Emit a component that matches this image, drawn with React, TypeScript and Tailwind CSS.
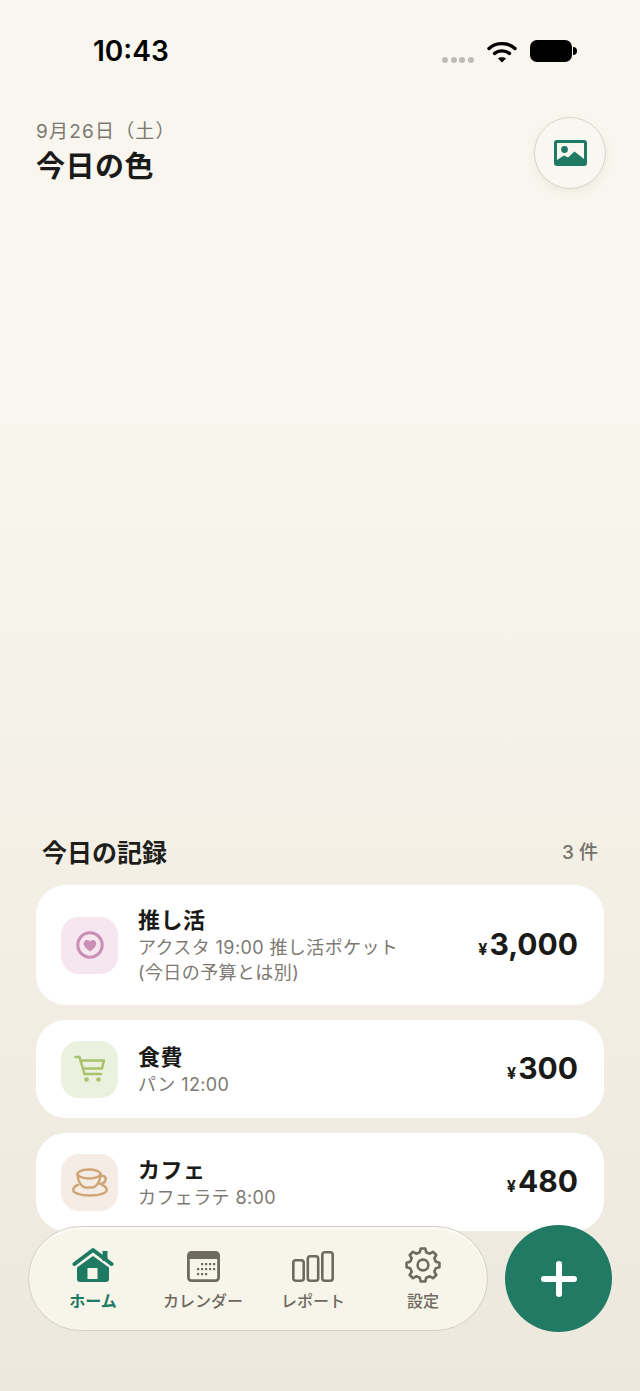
const JP = 'font-["Inter","Noto_Sans_CJK_JP",sans-serif]';

function ImageIcon() {
  return (
    <svg width="33" height="26" viewBox="0 0 33 26">
      <rect x="0" y="0" width="33" height="26" rx="3" fill="#1f7a63" />
      <rect x="3" y="3" width="27" height="18" rx="0.5" fill="#f8f6ef" />
      <circle cx="10.5" cy="9.5" r="3.4" fill="#1f7a63" />
      <path d="M3 20 L10 15.5 L14 17.5 L20.5 11.5 L30 19 V23 H3 Z" fill="#1f7a63" />
    </svg>
  );
}

function HeartIcon() {
  return (
    <svg width="28" height="28" viewBox="0 0 28 28">
      <circle cx="14" cy="14" r="12.2" fill="none" stroke="#c98fb4" strokeWidth="3" />
      <path d="M14 20.5 C9.5 17 7.8 15 7.8 12.4 C7.8 10.3 9.4 9 11.1 9 C12.3 9 13.4 9.6 14 10.7 C14.6 9.6 15.7 9 16.9 9 C18.6 9 20.2 10.3 20.2 12.4 C20.2 15 18.5 17 14 20.5 Z" fill="#c98fb4" />
    </svg>
  );
}

function CartIcon() {
  return (
    <svg width="32" height="28" viewBox="0 0 32 28" fill="none" stroke="#a9c26c" strokeWidth="2.5" strokeLinecap="round" strokeLinejoin="round">
      <path d="M1.5 2 H5.5 L10.5 19 H27" />
      <path d="M7 5.5 H30 L28 13.5 H9" />
      <circle cx="12.5" cy="24.5" r="2.3" fill="#a9c26c" stroke="none" />
      <circle cx="24.5" cy="24.5" r="2.3" fill="#a9c26c" stroke="none" />
    </svg>
  );
}

function CupIcon() {
  return (
    <svg width="36" height="29" viewBox="0 0 36 29" fill="none" stroke="#cfa675" strokeWidth="2.5" strokeLinecap="round">
      <ellipse cx="17" cy="6" rx="11.5" ry="4.5" />
      <path d="M5.5 6.5 C6 13 9 18 13 19.5 H21 C25 18 28 13 28.5 6.5" />
      <path d="M28 8 C32 7 34.2 9 33.5 12 C33 15 30 16 27 15.5" />
      <path d="M6 17 C3 18 1.3 19.8 1.3 22 C1.3 25 8 27.5 18 27.5 C28 27.5 34.7 25 34.7 22 C34.7 19.8 33 18 30 17" />
    </svg>
  );
}

function HomeIcon() {
  return (
    <svg width="42" height="36" viewBox="0 0 42 36">
      <rect x="30.5" y="4" width="5" height="10" fill="#1f7a63" />
      <path d="M2.5 17 L21 3 L39.5 17" fill="none" stroke="#1f7a63" strokeWidth="4" strokeLinecap="round" strokeLinejoin="round" />
      <path d="M5 20.5 L21 9 L37 20.5 V32 Q37 35 34 35 H8 Q5 35 5 32 Z" fill="#1f7a63" />
      <rect x="15.5" y="21" width="10" height="11" fill="#f7f4ea" />
    </svg>
  );
}

function CalendarIcon() {
  const dots = [
    [14, 12], [18, 12], [22, 12], [26, 12],
    [10, 17], [14, 17], [18, 17], [22, 17], [26, 17],
    [10, 22], [14, 22], [18, 22],
  ];
  return (
    <svg width="33" height="31" viewBox="0 0 33 31" className="mb-[1px]">
      <rect x="1.4" y="1.4" width="30.2" height="28.2" rx="3" fill="#f7f4ea" stroke="#6e6a60" strokeWidth="2.8" />
      <path d="M1 4 Q1 1 4 1 H29 Q32 1 32 4 V8 H1 Z" fill="#6e6a60" />
      {dots.map(([x, y]) => (
        <rect key={`${x}-${y}`} x={x} y={y} width="2.2" height="2.2" fill="#6e6a60" />
      ))}
    </svg>
  );
}

function BarsIcon() {
  return (
    <svg width="42" height="31" viewBox="0 0 42 31" fill="none" stroke="#6e6a60" strokeWidth="2.6" className="mb-[1px]">
      <rect x="1.3" y="9.3" width="10.4" height="20.4" rx="2.5" />
      <rect x="15.8" y="5.3" width="10.4" height="24.4" rx="2.5" />
      <rect x="30.3" y="1.3" width="10.4" height="28.4" rx="2.5" />
    </svg>
  );
}

// 8 toothed outline around the centre of a 36 box
const gearPoints = Array.from({ length: 8 }, (_, i) => {
  const base = i * 45 - 90;
  return [
    [13.2, base - 14],
    [16.6, base - 8],
    [16.6, base + 8],
    [13.2, base + 14],
  ]
    .map(([r, deg]) => {
      const a = (deg * Math.PI) / 180;
      return `${(18 + r * Math.cos(a)).toFixed(2)},${(18 + r * Math.sin(a)).toFixed(2)}`;
    })
    .join(' ');
}).join(' ');

function GearIcon() {
  return (
    <svg width="36" height="36" viewBox="0 0 36 36" fill="none" stroke="#6e6a60" strokeWidth="2.6" strokeLinejoin="round">
      <polygon points={gearPoints} />
      <circle cx="18" cy="18" r="5.4" />
    </svg>
  );
}

function RecordCard({ icon, iconBg, title, lines, amount, height }: { icon: React.ReactNode; iconBg: string; title: string; lines: string[]; amount: string; height: string }) {
  return (
    <div className={`flex items-center rounded-[30px] bg-white pr-[26px] pl-[25px] ${height}`}>
      <div className={`flex h-[57px] w-[57px] shrink-0 items-center justify-center rounded-[18px] ${iconBg}`}>{icon}</div>
      <div className="ml-[20px] min-w-0 flex-1">
        <div className="text-[22px] leading-[30px] font-bold tracking-[0.5px] text-[#1a1a18]">{title}</div>
        {lines.map((line) => (
          <div key={line} className="text-[18px] leading-[25px] tracking-[0.4px] text-[#7b7972]">{line}</div>
        ))}
      </div>
      <div className="flex items-baseline text-[#1a1a18]">
        <span className="mr-[2px] text-[16px] font-bold">¥</span>
        <span className="text-[30px] leading-none font-bold">{amount}</span>
      </div>
    </div>
  );
}

function NavItem({ icon, label, active }: { icon: React.ReactNode; label: string; active?: boolean }) {
  return (
    <div className="flex w-[110px] flex-col items-center">
      <div className="flex h-[38px] items-end justify-center">{icon}</div>
      <div className={`mt-[6px] text-[16px] leading-[24px] ${active ? 'font-bold text-[#1f7a63]' : 'font-medium text-[#6e6a60]'}`}>{label}</div>
    </div>
  );
}

export default function App() {
  return (
    <div className={`relative h-[1391px] w-[640px] overflow-hidden bg-gradient-to-b from-[#f8f6ee] from-30% via-[#f3efe5] via-65% to-[#ece8dc] ${JP}`}>
      <div className="flex h-[103px] items-start justify-between pt-[33px] pr-[63px] pl-[93px]">
        <div className="text-[28px] leading-[36px] font-semibold text-black">10:43</div>
        <div className="flex items-start pt-[7px]">
          <div className="mt-[17px] mr-[13px] flex gap-[2.6px]">
            <span className="h-[6px] w-[6px] rounded-full bg-[#bdbbb4]" />
            <span className="h-[6px] w-[6px] rounded-full bg-[#bdbbb4]" />
            <span className="h-[6px] w-[6px] rounded-full bg-[#bdbbb4]" />
            <span className="h-[6px] w-[6px] rounded-full bg-[#bdbbb4]" />
          </div>
          <svg width="30" height="22" viewBox="0 0 30 22" fill="none" stroke="#000" strokeWidth="3.4" strokeLinecap="round" className="mt-[1px]">
            <path d="M2 7.5 C9 1 21 1 28 7.5" />
            <path d="M7.5 12.5 C11.5 9 18.5 9 22.5 12.5" />
            <path d="M15 21.5 L11 17.5 C13 15.8 17 15.8 19 17.5 Z" fill="#000" stroke="none" />
          </svg>
          <div className="ml-[13px] flex items-center">
            <div className="h-[22px] w-[42px] rounded-[7px] bg-black" />
            <div className="ml-[1px] h-[8px] w-[4px] rounded-r-full bg-black" />
          </div>
        </div>
      </div>

      <div className="flex items-start justify-between pr-[34px] pl-[36px]">
        <div className="pt-[16px]">
          <div className="text-[19px] leading-[26px] font-normal tracking-[1.2px] text-[#7b7870]">9月26日（土）</div>
          <div className="mt-[2px] text-[29px] leading-[40px] font-bold tracking-[0.5px] text-[#1a1a18]">今日の色</div>
        </div>
        <div className="mt-[14px] flex h-[72px] w-[72px] items-center justify-center rounded-full border border-[#d8d5ca] bg-[#f9f7f1] shadow-[0_4px_10px_rgba(120,110,90,0.08)]">
          <ImageIcon />
        </div>
      </div>

      <div className="mt-[646px] px-[36px]">
        <div className="flex items-center justify-between px-[6px]">
          <div className="text-[25px] leading-[36px] font-bold text-[#1f1e1a]">今日の記録</div>
          <div className="text-[19px] leading-[36px] font-medium text-[#75726a]">3 件</div>
        </div>
        <div className="mt-[14px] flex flex-col gap-[15px]">
          <RecordCard icon={<HeartIcon />} iconBg="bg-[#f5e6f0]" title="推し活" lines={['アクスタ 19:00 推し活ポケット', '(今日の予算とは別)']} amount="3,000" height="h-[120px]" />
          <RecordCard icon={<CartIcon />} iconBg="bg-[#ebf1df]" title="食費" lines={['パン 12:00']} amount="300" height="h-[98px]" />
          <RecordCard icon={<CupIcon />} iconBg="bg-[#f5ece6]" title="カフェ" lines={['カフェラテ 8:00']} amount="480" height="h-[98px]" />
        </div>
      </div>

      <div className="absolute right-[28px] bottom-[59px] left-[28px] flex items-center justify-between">
        <nav className="flex h-[105px] w-[460px] items-center justify-center rounded-full border border-[#d2cfc2] bg-[#f7f4ea] shadow-[inset_0_2px_3px_rgba(255,255,255,0.8)]">
          <NavItem icon={<HomeIcon />} label="ホーム" active />
          <NavItem icon={<CalendarIcon />} label="カレンダー" />
          <NavItem icon={<BarsIcon />} label="レポート" />
          <NavItem icon={<GearIcon />} label="設定" />
        </nav>
        <button className="flex h-[107px] w-[107px] items-center justify-center rounded-full bg-[#217a64]">
          <svg width="36" height="36" viewBox="0 0 36 36" stroke="#fff" strokeWidth="6" strokeLinecap="round">
            <path d="M18 3 V33 M3 18 H33" />
          </svg>
        </button>
      </div>
    </div>
  );
}
